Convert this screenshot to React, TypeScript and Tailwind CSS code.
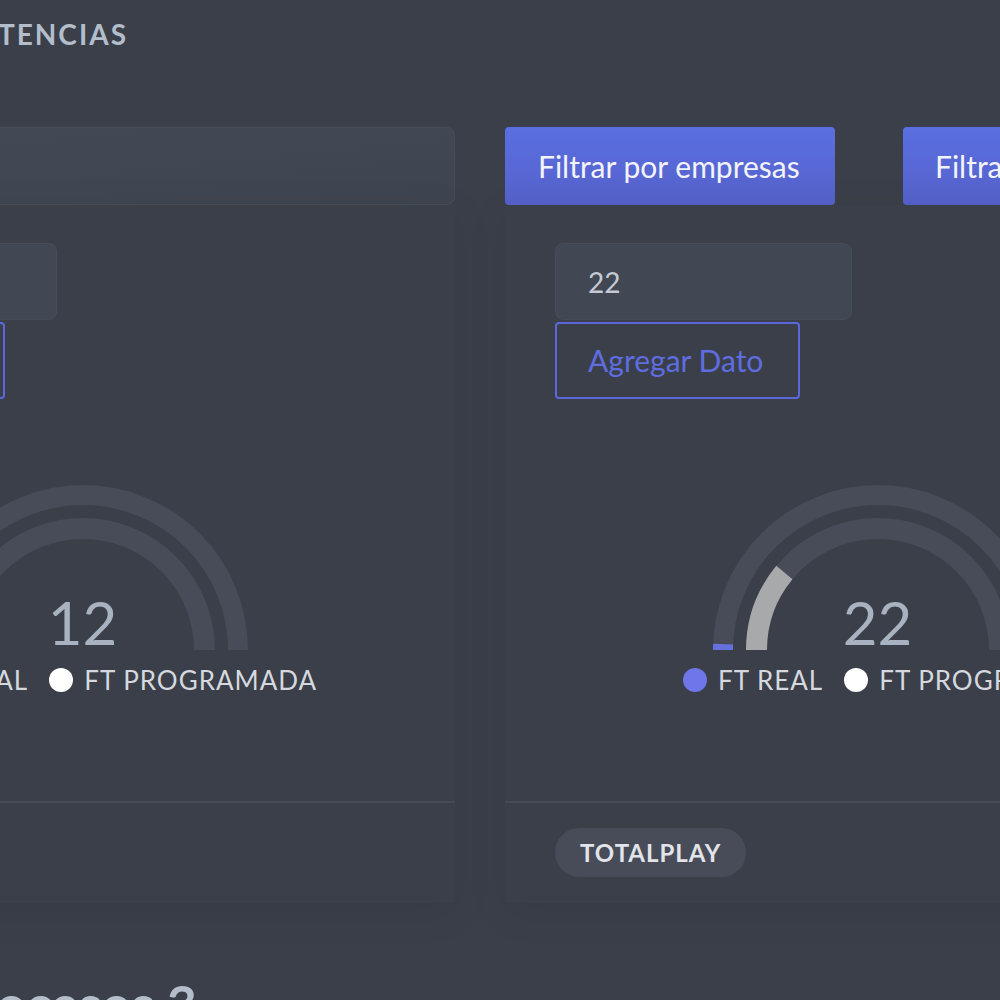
import React from 'react';

type GaugeProps = {
  value: number;
  real: number;
  programada: number;
};

const CX = 170;
const CY = 165;

// arc from the left end (180deg) going clockwise over `frac` of the half circle
const arcPath = (r: number, frac: number) => {
  const a = Math.PI - Math.PI * frac;
  const x = CX + r * Math.cos(a);
  const y = CY - r * Math.sin(a);
  return `M${CX - r} ${CY} A${r} ${r} 0 0 1 ${x.toFixed(2)} ${y.toFixed(2)}`;
};

const Gauge: React.FC<GaugeProps> = ({ value, real, programada }) => (
  <div className="relative mx-auto w-[340px] h-[165px]">
    <svg width="340" height="165" viewBox="0 0 340 165" className="block">
      <path d={arcPath(155, 1)} fill="none" stroke="#474c58" strokeWidth="20" />
      <path d={arcPath(121.5, 1)} fill="none" stroke="#474c58" strokeWidth="21" />
      {real > 0 && <path d={arcPath(155, real)} fill="none" stroke="#6670df" strokeWidth="20" />}
      {programada > 0 && (
        <path d={arcPath(121.5, programada)} fill="none" stroke="#a8a9aa" strokeWidth="21" />
      )}
    </svg>
    <div className="absolute left-0 right-0 top-[107px] text-center text-[60px] leading-none font-normal text-[#a8b2c0]">
      {value}
    </div>
  </div>
);

type Card = {
  dato: string;
  value: number;
  real: number;
  programada: number;
  empresa: string;
};

const cards: Card[] = [
  { dato: '12', value: 12, real: 0.012, programada: 0.14, empresa: 'IZZI' },
  { dato: '22', value: 22, real: 0.012, programada: 0.22, empresa: 'TOTALPLAY' },
];

const GaugeCard: React.FC<{ card: Card }> = ({ card }) => (
  <div className="bg-[#3a3f49] shadow-[0_8px_40px_rgba(0,0,0,0.07)] px-[50px] pt-[38px] pb-[26px]">
    <div className="w-[297px] h-[77px] rounded-lg bg-[#424853] border border-[#474d58] flex items-center pl-[32px] text-[28px] text-[#c4cad3]">
      {card.dato}
    </div>
    <button className="mt-[2px] w-[245px] h-[77px] rounded border-2 border-[#5a68dc] text-[30px] text-[#5f6de0] flex items-center pl-[31px]">
      Agregar Dato
    </button>

    <div className="mt-[86px]">
      <Gauge value={card.value} real={card.real} programada={card.programada} />
    </div>

    <div className="mt-[18px] pl-[128px] h-[24px] flex items-center whitespace-nowrap text-[26px] tracking-[1px] text-[#d5d9df]">
      <span className="w-6 h-6 rounded-full bg-[#6d77e8] shrink-0"></span>
      <span className="ml-[11px]">FT REAL</span>
      <span className="ml-[21px] w-6 h-6 rounded-full bg-white shrink-0"></span>
      <span className="ml-[11px]">FT PROGRAMADA</span>
    </div>

    <div className="mt-[109px] -mx-[50px] h-[2px] bg-[#464b56]"></div>

    <div className="mt-[25px] inline-flex items-center h-[49px] px-[25px] rounded-full bg-[#474c58] text-[24px] tracking-[1px] font-bold text-[#e1e4e9]">
      {card.empresa}
    </div>
  </div>
);

export default function App() {
  return (
    <div className="w-[1000px] h-[1000px] overflow-hidden bg-[#3a3f49] font-['Lato',sans-serif]">
      <div className="pt-5 flex justify-end w-[128px] whitespace-nowrap">
        <h1 className="text-[28px] leading-none font-bold tracking-[2px] text-[#b4becb]">
          COMPETENCIAS
        </h1>
      </div>

      <div className="ml-[-290px] w-[1540px] mt-[79px]">
        {/* filters */}
        <div className="grid grid-cols-2 gap-[50px]">
          <div className="h-[78px] rounded-lg border border-[#474d58] bg-gradient-to-br from-[#444a55] to-[#3f4550]"></div>
          <div className="flex gap-[68px]">
            <button className="w-[330px] h-[78px] shrink-0 rounded bg-gradient-to-b from-[#5b6fe2] to-[#5561c9] text-[30px] text-[#f3f4fa] text-left pl-[33px]">
              Filtrar por empresas
            </button>
            <button className="w-[330px] h-[78px] shrink-0 rounded bg-gradient-to-b from-[#5b6fe2] to-[#5561c9] text-[30px] text-[#f3f4fa] text-left pl-[32px] whitespace-nowrap">
              Filtrar por fechas
            </button>
          </div>
        </div>

        {/* gauges */}
        <div className="grid grid-cols-2 gap-[50px]">
          {cards.map((c) => (
            <GaugeCard key={c.empresa} card={c} />
          ))}
        </div>
      </div>

      <div className="mt-[74px] flex justify-end w-[197px] whitespace-nowrap">
        <h2 className="text-[52px] leading-none font-bold text-[#b4becb]">Procesos 3</h2>
      </div>
    </div>
  );
}
